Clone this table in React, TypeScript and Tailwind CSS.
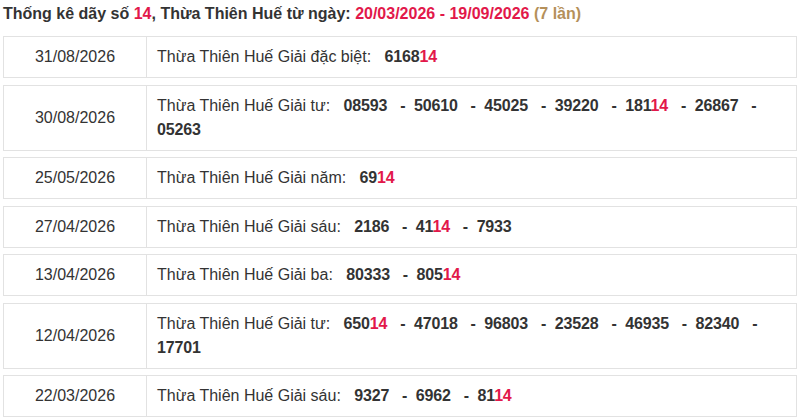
const RED = "text-[#e2184a]";

type Row = { date: string; prize: string; nums: string[] };

const rows: Row[] = [
  { date: "31/08/2026", prize: "Giải đặc biệt:", nums: ["616814"] },
  { date: "30/08/2026", prize: "Giải tư:", nums: ["08593", "50610", "45025", "39220", "18114", "26867", "05263"] },
  { date: "25/05/2026", prize: "Giải năm:", nums: ["6914"] },
  { date: "27/04/2026", prize: "Giải sáu:", nums: ["2186", "4114", "7933"] },
  { date: "13/04/2026", prize: "Giải ba:", nums: ["80333", "80514"] },
  { date: "12/04/2026", prize: "Giải tư:", nums: ["65014", "47018", "96803", "23528", "46935", "82340", "17701"] },
  { date: "22/03/2026", prize: "Giải sáu:", nums: ["9327", "6962", "8114"] },
];

function Num({ n }: { n: string }) {
  // last two digits highlighted when they match
  if (n.endsWith("14")) {
    return (
      <>
        {n.slice(0, -2)}
        <span className={RED}>14</span>
      </>
    );
  }
  return <>{n}</>;
}

export default function App() {
  return (
    <div className="bg-white px-[3px] text-[16px] text-[#333] font-['Liberation_Sans',Arial,sans-serif]">
      <div className="pt-[2px] mb-[10px] leading-[24px] font-bold">
        Thống kê dãy số <span className={RED}>14</span>, Thừa Thiên Huế từ ngày:{" "}
        <span className={RED}>20/03/2026 - 19/09/2026</span>{" "}
        <span className="text-[#b5905a]">(7 lần)</span>
      </div>

      <div className="w-[794px] flex flex-col gap-[6.5px]">
        {rows.map((r) => (
          <div key={r.date + r.prize} className="flex border border-[#e2e2e2] leading-[24px]">
            <div className="w-[143px] shrink-0 border-r border-[#e2e2e2] flex items-center justify-center py-2">
              {r.date}
            </div>
            <div className="flex-1 pl-[10px] pr-[10px] py-2">
              Thừa Thiên Huế {r.prize}
              {"\u00a0\u00a0 "}
              <span className="font-bold tracking-[-0.15px]">
                {r.nums.map((n, i) => (
                  <span key={i}>
                    <Num n={n} />
                    {i < r.nums.length - 1 && "\u00a0\u00a0\u00a0-\u00a0 "}
                  </span>
                ))}
              </span>
            </div>
          </div>
        ))}
      </div>
    </div>
  );
}
